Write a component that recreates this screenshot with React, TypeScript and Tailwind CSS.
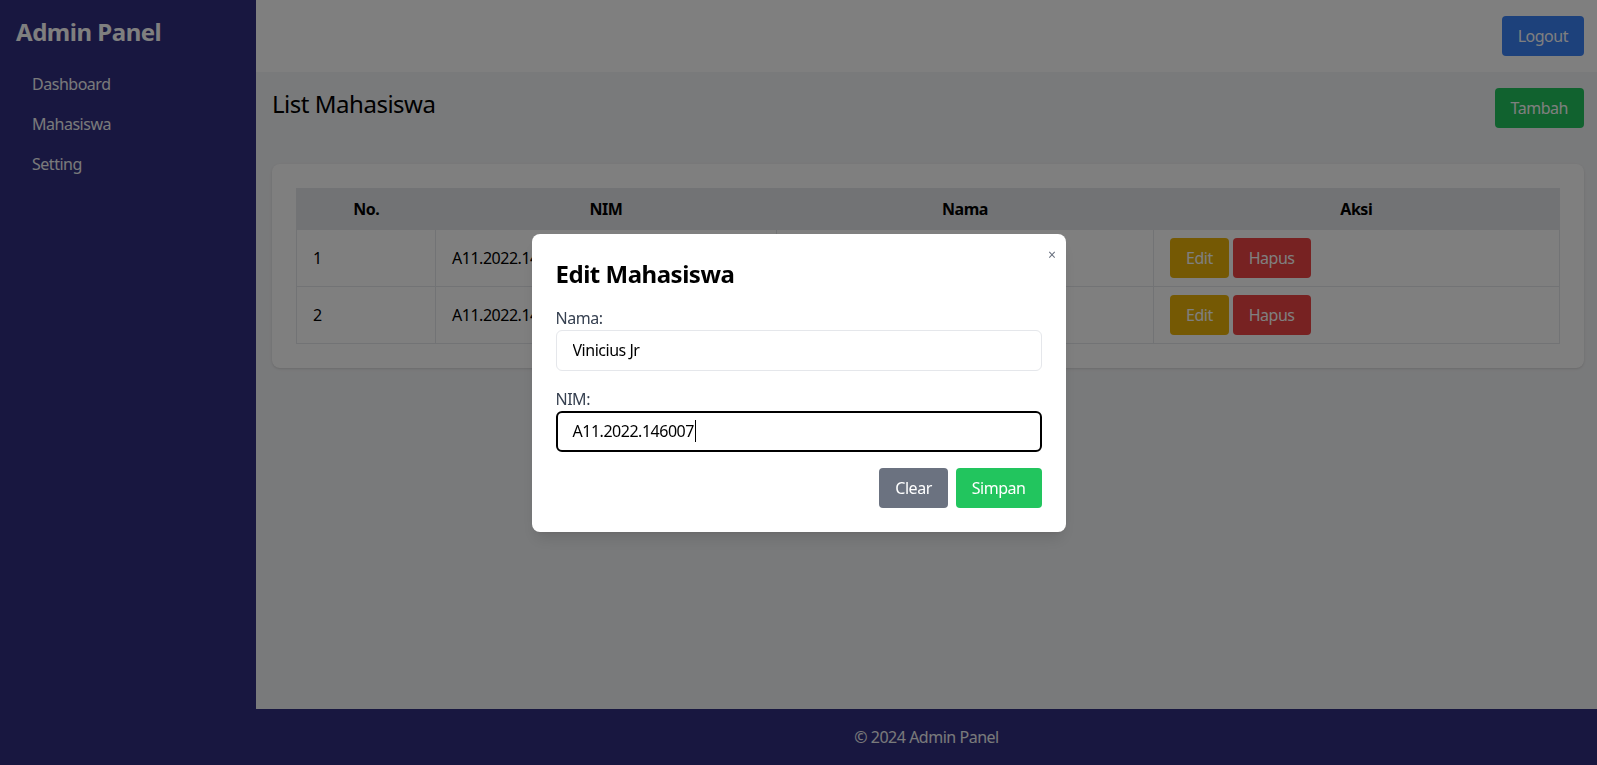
const rows = [
  { no: 1, nim: "A11.2022.146001", nama: "Jude Bellingham" },
  { no: 2, nim: "A11.2022.146007", nama: "Vinicius Jr" },
];

export default function App() {
  return (
    <div className="relative flex h-screen font-['Noto_Sans',sans-serif] tracking-[-0.03em] text-black">
      {/* Sidebar */}
      <aside className="w-64 shrink-0 bg-[#312e81] p-4 text-white">
        <h1 className="text-2xl font-bold">Admin Panel</h1>
        <ul className="mt-4 text-gray-100">
          <li className="px-4 py-2">Dashboard</li>
          <li className="px-4 py-2">Mahasiswa</li>
          <li className="px-4 py-2">Setting</li>
        </ul>
      </aside>

      <div className="flex min-w-0 flex-1 flex-col">
        {/* Header */}
        <header className="flex h-[72px] shrink-0 items-center justify-end bg-white pr-[13px]">
          <button className="h-10 rounded bg-[#3b82f6] px-4 text-white">Logout</button>
        </header>

        {/* Main */}
        <main className="flex-1 bg-[#f3f4f6] pl-4 pr-[13px] pt-4">
          <div className="mb-9 flex items-start justify-between">
            <h2 className="text-2xl">List Mahasiswa</h2>
            <button className="h-10 rounded bg-[#22c55e] px-4 text-white">Tambah</button>
          </div>

          <div className="rounded-lg bg-white p-6 shadow">
            <table className="w-full table-fixed border-collapse border border-[#e5e7eb]">
              <thead>
                <tr className="bg-[#e5e7eb]">
                  <th className="w-[139px] px-4 py-2">No.</th>
                  <th className="w-[341px] px-4 py-2">NIM</th>
                  <th className="w-[377px] px-4 py-2">Nama</th>
                  <th className="px-4 py-2">Aksi</th>
                </tr>
              </thead>
              <tbody>
                {rows.map((r) => (
                  <tr key={r.no}>
                    <td className="border border-[#e5e7eb] px-4 py-4">{r.no}</td>
                    <td className="border border-[#e5e7eb] px-4 py-4">{r.nim}</td>
                    <td className="border border-[#e5e7eb] px-4 py-4">{r.nama}</td>
                    <td className="border border-[#e5e7eb] px-4 py-2">
                      <div className="flex gap-1">
                        <button className="h-10 rounded bg-[#eab308] px-4 text-white">Edit</button>
                        <button className="h-10 rounded bg-[#ef4444] px-4 text-white">Hapus</button>
                      </div>
                    </td>
                  </tr>
                ))}
              </tbody>
            </table>
          </div>
        </main>

        {/* Footer */}
        <footer className="shrink-0 bg-[#312e81] py-4 text-center text-gray-100">
          © 2024 Admin Panel
        </footer>
      </div>

      {/* Modal */}
      <div className="fixed inset-0 flex items-center justify-center bg-black/50">
        <div className="relative w-[534px] rounded-lg bg-white p-6 shadow-lg">
          <button className="absolute right-[10px] top-[11px] text-sm leading-5 text-[#6b7280]">×</button>
          <h3 className="mb-4 text-2xl font-bold">Edit Mahasiswa</h3>
          <label className="block text-[#374151]">Nama:</label>
          <input
            className="block h-[41px] w-full rounded-md border border-[#e5e7eb] px-4 tracking-[-0.03em] outline-none"
            defaultValue="Vinicius Jr"
          />
          <label className="mt-4 block text-[#374151]">NIM:</label>
          <div className="flex h-[41px] w-full items-center rounded-md border-2 border-black px-[15px]">
            A11.2022.146007
            <span className="ml-px inline-block h-[22px] w-px bg-black" />
          </div>
          <div className="mt-4 flex justify-end gap-2">
            <button className="h-10 rounded bg-[#6b7280] px-4 text-white">Clear</button>
            <button className="h-10 rounded bg-[#22c55e] px-4 text-white">Simpan</button>
          </div>
        </div>
      </div>
    </div>
  );
}
